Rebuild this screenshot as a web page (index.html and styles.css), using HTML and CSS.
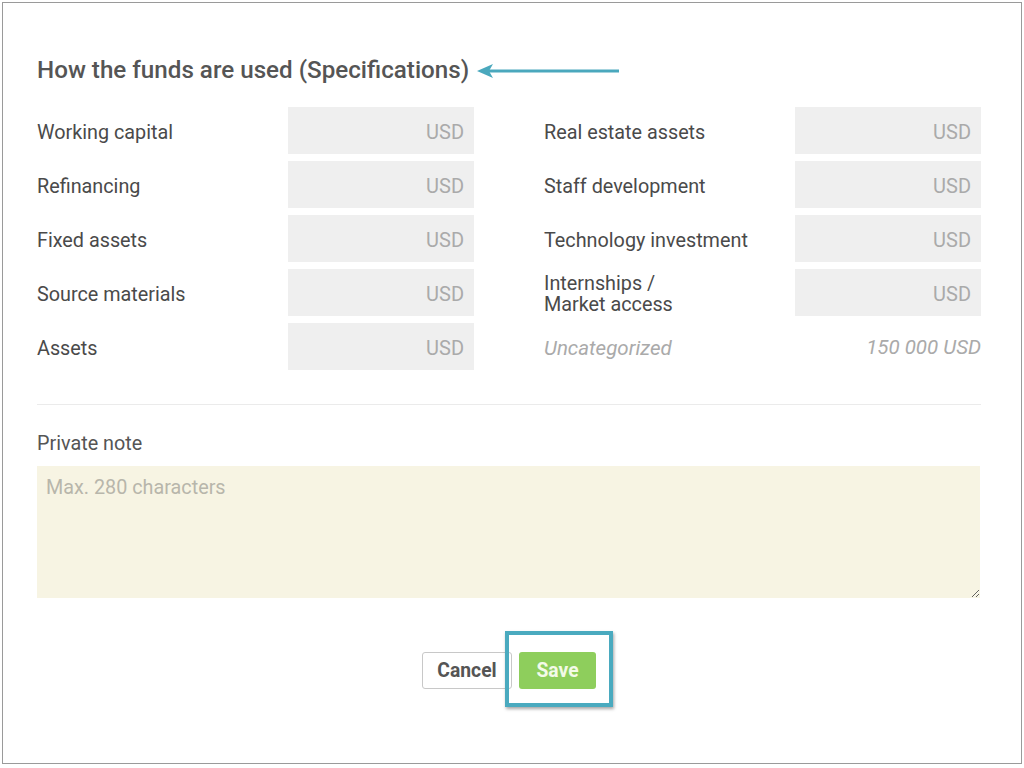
FILE: index.html
```html
<!DOCTYPE html>
<html lang="en">
<head>
    <meta charset="UTF-8">
    <meta name="viewport" content="width=device-width, initial-scale=1.0">
    <title>Specifications</title>
    <link rel="stylesheet" href="styles.css">
</head>
<body>
    <div class="frame">
        <div class="heading-row">
            <span class="heading">How the funds are used (Specifications)</span>
            <svg class="arrow" width="144" height="16" viewBox="0 0 144 16">
                <polygon points="0,8 16,1 12,8 16,15" fill="#4aa8bd"/>
                <rect x="12" y="6.5" width="130" height="3" fill="#4aa8bd"/>
            </svg>
        </div>

        <div class="specs">
            <div class="spec"><span class="label">Working capital</span><input class="amount" placeholder="USD"></div>
            <div class="spec"><span class="label">Real estate assets</span><input class="amount" placeholder="USD"></div>
            <div class="spec"><span class="label">Refinancing</span><input class="amount" placeholder="USD"></div>
            <div class="spec"><span class="label">Staff development</span><input class="amount" placeholder="USD"></div>
            <div class="spec"><span class="label">Fixed assets</span><input class="amount" placeholder="USD"></div>
            <div class="spec"><span class="label">Technology investment</span><input class="amount" placeholder="USD"></div>
            <div class="spec"><span class="label">Source materials</span><input class="amount" placeholder="USD"></div>
            <div class="spec"><span class="label">Internships /<br>Market access</span><input class="amount" placeholder="USD"></div>
            <div class="spec"><span class="label">Assets</span><input class="amount" placeholder="USD"></div>
            <div class="spec uncategorized"><span class="label">Uncategorized</span><span class="total">150 000 USD</span></div>
        </div>

        <hr class="divider">

        <label class="note-label" for="note">Private note</label>
        <textarea class="note" id="note" placeholder="Max. 280 characters"></textarea>

        <div class="actions">
            <button class="btn cancel">Cancel</button>
            <div class="save-wrap">
                <button class="btn save">Save</button>
                <span class="highlight"></span>
            </div>
        </div>
    </div>
</body>
</html>
```

FILE: styles.css
```css
body {
    margin: 0;
    background-color: white;
    font-family: Roboto, "Liberation Sans", sans-serif;
    color: #444;
}
.frame {
    margin: 2px;
    height: 762px;
    border: 1px solid #9a9a9a;
    box-sizing: border-box;
    padding: 53px 40px 0 34px;
}
.heading-row {
    display: flex;
    align-items: center;
    gap: 8px;
    height: 28px;
}
.heading {
    font-size: 24.2px;
    font-weight: 500;
    color: #555;
    line-height: 28px;
}
.arrow {
    display: block;
    margin-top: 1px;
}
.specs {
    margin-top: 23px;
    display: grid;
    grid-template-columns: 437px 437px;
    column-gap: 70px;
    row-gap: 7px;
}
.spec {
    display: flex;
    align-items: center;
    height: 47px;
}
.label {
    flex: 1;
    font-size: 19.8px;
    line-height: 21px;
    color: #4a4a4a;
    padding-top: 3px;
}
.amount {
    width: 186px;
    height: 47px;
    box-sizing: border-box;
    border: none;
    background-color: #efefef;
    padding: 3px 10px 0 10px;
    text-align: right;
    font-family: Roboto, "Liberation Sans", sans-serif;
    font-size: 20px;
    color: #444;
}
.amount::placeholder {
    color: #aaa;
}
.uncategorized .label,
.total {
    font-style: italic;
    color: #aaa;
    font-size: 20.5px;
}
.divider {
    margin: 34px 0 0 0;
    border: none;
    border-top: 1px solid #ebebeb;
}
.note-label {
    display: block;
    margin-top: 27px;
    font-size: 19.8px;
    line-height: 24px;
    color: #555;
}
.note {
    display: block;
    margin-top: 10px;
    width: 943px;
    height: 132px;
    box-sizing: border-box;
    border: none;
    background-color: #f7f4e3;
    padding: 10px 9px;
    font-family: Roboto, "Liberation Sans", sans-serif;
    font-size: 19.8px;
    resize: vertical;
}
.note::placeholder {
    color: #b8b6ab;
}
.actions {
    margin-top: 54px;
    display: flex;
    justify-content: center;
    gap: 7px;
}
.btn {
    height: 37px;
    border-radius: 3px;
    font-family: Roboto, "Liberation Sans", sans-serif;
    font-size: 19.3px;
    font-weight: 700;
    padding: 0;
}
.cancel {
    width: 90px;
    background-color: white;
    border: 1px solid #c8c8c8;
    color: #555;
}
.save-wrap {
    position: relative;
}
.save {
    width: 77px;
    display: block;
    border: none;
    background-color: #8ece5c;
    color: #f3fae8;
}
.highlight {
    position: absolute;
    left: -14px;
    top: -21px;
    right: -17px;
    bottom: -18px;
    border: 4px solid #4aaabf;
    box-shadow: 1px 2px 3px rgba(0, 0, 0, 0.35);
}
```
